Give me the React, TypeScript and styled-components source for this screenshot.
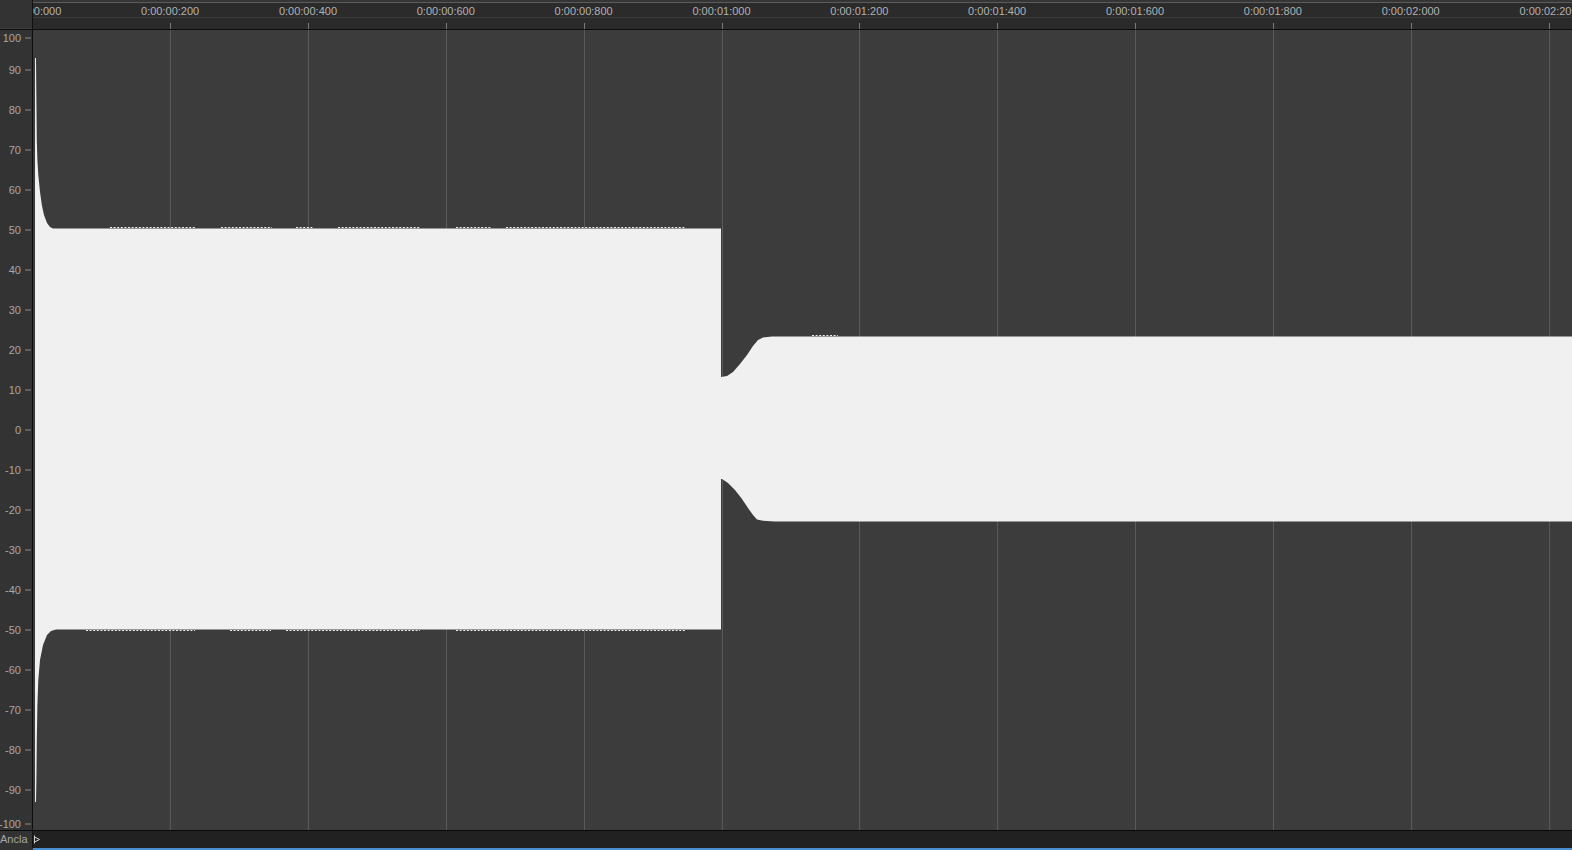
import styled, { createGlobalStyle } from "styled-components";

const GlobalStyle = createGlobalStyle`
  html, body {
    margin: 0;
    padding: 0;
    background: #2b2b2b;
    overflow: hidden;
  }
  body {
    font-family: "Liberation Sans", Arial, sans-serif;
  }
`;

// page layout constants (px)
const AXIS_W = 32;
const PLOT_X = 33;
const PLOT_Y = 30;
const PLOT_H = 800;
const MS_TO_PX = 0.6892;
const X_ZERO = 32.3;

const Frame = styled.div`
  width: 1572px;
  height: 850px;
  display: flex;
  flex-direction: column;
  overflow: hidden;
  background: #2b2b2b;
`;

const HeaderRow = styled.div`
  display: flex;
  height: 29px;
  border-bottom: 1px solid #0e0e0e;
`;

const Corner = styled.div`
  width: ${AXIS_W}px;
  background: #333333;
  border-right: 1px solid #111;
  box-shadow: inset 0 -1px 0 #3e3e3e;
`;

const Ruler = styled.div`
  flex: 1;
  display: flex;
  flex-direction: column;
  overflow: hidden;
  background: #2b2b2b;
`;

const RulerEdge = styled.div`
  height: 3px;
  background: linear-gradient(#353535 0 2px, #5c5c5c 2px 3px);
`;

const LabelRow = styled.div`
  position: relative;
  height: 14px;
  border-bottom: 1px solid #3a3a3a;
`;

const TimeLabel = styled.span`
  position: absolute;
  top: 2px;
  transform: translateX(-50%);
  font-size: 11px;
  line-height: 13px;
  color: #b2b2b2;
  white-space: nowrap;
`;

const TickRow = styled.div`
  position: relative;
  flex: 1;
  background: #2a2a2a;
`;

const RulerTick = styled.div`
  position: absolute;
  bottom: 0;
  width: 1px;
  height: 6px;
  background: #7a7a7a;
`;

const Body = styled.div`
  display: flex;
  height: ${PLOT_H}px;
`;

const Axis = styled.div`
  position: relative;
  width: ${AXIS_W}px;
  background: #333333;
  border-right: 1px solid #0e0e0e;
`;

const AxisMark = styled.div`
  position: absolute;
  right: 1px;
  display: flex;
  align-items: center;
  gap: 4px;
  transform: translateY(-50%);
  font-size: 11px;
  line-height: 13px;
  color: #a8a8a8;
`;

const AxisTick = styled.span`
  width: 6px;
  height: 1px;
  background: #8a8a8a;
`;

const Plot = styled.div`
  flex: 1;
  background: #3c3c3c;
  overflow: hidden;
`;

const FooterRow = styled.div`
  display: flex;
  height: 17px;
  border-top: 1px solid #0a0a0a;
`;

const FooterLabel = styled.div`
  width: ${AXIS_W}px;
  background: #323232;
  border-right: 1px solid #111;
  font-size: 11px;
  line-height: 17px;
  color: #a8a8a8;
  overflow: hidden;
  white-space: nowrap;
`;

const Track = styled.div`
  flex: 1;
  display: flex;
  align-items: center;
  background: #212121;
  padding-left: 1px;
`;

const StatusLine = styled.div`
  display: flex;
  height: 2px;
`;

const StatusPad = styled.div`
  width: ${AXIS_W + 1}px;
  background: #323232;
`;

const StatusBlue = styled.div`
  flex: 1;
  background: #4a8ed2;
`;

const times = Array.from({ length: 12 }, (_, i) => i * 200);

const fmt = (ms: number) => {
  const s = Math.floor(ms / 1000);
  const r = ms % 1000;
  return `0:00:0${s}:${String(r).padStart(3, "0")}`;
};

const timeX = (ms: number) => X_ZERO + ms * MS_TO_PX;

const levels = Array.from({ length: 21 }, (_, i) => 100 - i * 10);
const levelY = (v: number) => {
  const y = (100 - v) * 4;
  return Math.min(Math.max(y, 7.5), 793.5);
};

const wavePath = [
  "M35,430 L35,58 L36,58 L36.4,100 L36.8,140 L37.4,160 L38.3,175 L40,192 L42,206 L44,215 L47,223 L50,227 L53,228.5",
  "L721,228.5 L721,377 L727,376 L733,372 L740,364 L747,355 L753,346 L758,340 L763,337.5 L772,336.5 L1580,336.5",
  "L1580,521.5 L775,521.5 L763,520.8 L757,519.5 L753,515 L748,508 L742,499 L735,490 L728,483 L722,479 L721,479",
  "L721,629.5 L56,629.5 L51,631 L47,635 L43,645 L40,660 L38.3,680 L37.4,705 L36.8,740 L36.4,780 L36,802 L35,802 Z",
].join(" ");

const ripples: [number, number, number][] = [
  [110, 195, 227.5],
  [221, 272, 227.5],
  [296, 313, 227.5],
  [338, 420, 227.5],
  [456, 491, 227.5],
  [506, 686, 227.5],
  [86, 195, 630.5],
  [230, 271, 630.5],
  [286, 420, 630.5],
  [456, 686, 630.5],
  [812, 838, 335.5],
];

const Waveform = () => (
  <svg width="1539" height={PLOT_H} viewBox={`0 0 1539 ${PLOT_H}`}>
    <g transform={`translate(${-PLOT_X},${-PLOT_Y})`}>
      {times.map((t) =>
        t === 0 ? null : (
          <line
            key={t}
            x1={Math.round(timeX(t)) + 0.5}
            x2={Math.round(timeX(t)) + 0.5}
            y1={PLOT_Y}
            y2={PLOT_Y + PLOT_H}
            stroke="#5a5a5a"
            strokeWidth={1}
          />
        )
      )}
      <path d={wavePath} fill="#f0f0f0" />
      {ripples.map(([a, b, y]) => (
        <line
          key={`${a}-${y}`}
          x1={a}
          x2={b}
          y1={y}
          y2={y}
          stroke="#f0f0f0"
          strokeWidth={1}
          strokeDasharray="2 1.6"
        />
      ))}
    </g>
  </svg>
);

const AnchorMark = () => (
  <svg width="7" height="9" viewBox="0 0 7 9">
    <path d="M0.5 0.5 V8.5 M0.5 2 L5.5 4.5 L0.5 7" fill="none" stroke="#cfcfcf" strokeWidth="1" />
  </svg>
);

export default function App() {
  return (
    <>
      <GlobalStyle />
      <Frame>
        <HeaderRow>
          <Corner />
          <Ruler>
            <RulerEdge />
            <LabelRow>
              {times.map((t) => (
                <TimeLabel key={t} style={{ left: timeX(t) - PLOT_X }}>
                  {fmt(t)}
                </TimeLabel>
              ))}
            </LabelRow>
            <TickRow>
              {times.map((t) => (
                <RulerTick key={t} style={{ left: Math.round(timeX(t)) - PLOT_X }} />
              ))}
            </TickRow>
          </Ruler>
        </HeaderRow>
        <Body>
          <Axis>
            {levels.map((v) => (
              <AxisMark key={v} style={{ top: levelY(v) }}>
                {v}
                <AxisTick />
              </AxisMark>
            ))}
          </Axis>
          <Plot>
            <Waveform />
          </Plot>
        </Body>
        <FooterRow>
          <FooterLabel>Ancla</FooterLabel>
          <Track>
            <AnchorMark />
          </Track>
        </FooterRow>
        <StatusLine>
          <StatusPad />
          <StatusBlue />
        </StatusLine>
      </Frame>
    </>
  );
}
